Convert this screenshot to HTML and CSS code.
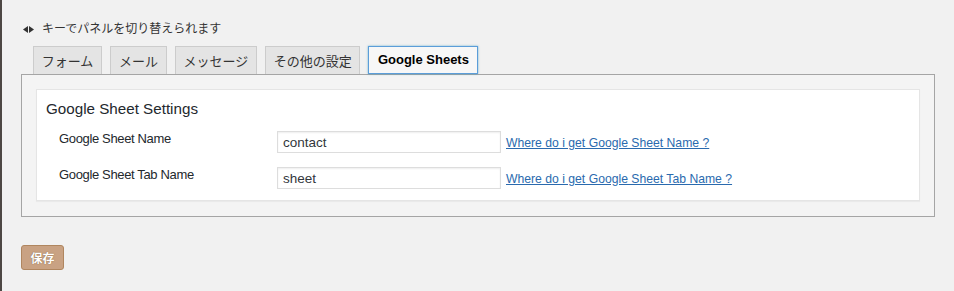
FILE: index.html
```html
<!DOCTYPE html>
<html lang="ja">
<head>
<meta charset="utf-8">
<title>Google Sheets</title>
<link rel="stylesheet" href="styles.css">
</head>
<body>
<div class="wrap">
  <p class="hint">
    <svg class="hint-icon" width="11" height="7" viewBox="0 0 11 7" aria-hidden="true">
      <polygon points="0,3.5 5,0 5,7" fill="#333"/>
      <polygon points="11,3.5 6,0 6,7" fill="#333"/>
    </svg>
    <span>キーでパネルを切り替えられます</span>
  </p>
  <ul class="tabs">
    <li class="tab">フォーム</li>
    <li class="tab">メール</li>
    <li class="tab">メッセージ</li>
    <li class="tab">その他の設定</li>
    <li class="tab tab-active">Google Sheets</li>
  </ul>
  <div class="panel">
    <div class="box">
      <h2 class="box-title">Google Sheet Settings</h2>
      <div class="form-grid">
        <label class="label">Google Sheet Name</label>
        <input class="field" type="text" value="contact">
        <a class="help" href="#">Where do i get Google Sheet Name ?</a>
        <label class="label">Google Sheet Tab Name</label>
        <input class="field" type="text" value="sheet">
        <a class="help" href="#">Where do i get Google Sheet Tab Name ?</a>
      </div>
    </div>
  </div>
  <button class="save" type="button">保存</button>
</div>
</body>
</html>
```

FILE: styles.css
```css
html, body {
  margin: 0;
  padding: 0;
}
body {
  background: #f1f1f1;
  border-left: 2px solid #4d4744;
  min-height: 291px;
  box-sizing: border-box;
  font-family: "Liberation Sans", Arial, "Noto Sans CJK JP", sans-serif;
  color: #333;
}
.wrap {
  padding: 0 18px 0 19px;
}
.hint {
  margin: 20px 0 0 2px;
  height: 16px;
  display: flex;
  align-items: center;
  gap: 8px;
  font-size: 12px;
  line-height: 16px;
  color: #333;
  font-family: "Noto Sans CJK JP", sans-serif;
}
.hint-icon {
  display: block;
  margin-top: 2px;
}
.tabs {
  list-style: none;
  margin: 10px 0 0 12px;
  padding: 0;
  display: flex;
  gap: 8px;
  height: 28px;
}
.tab {
  box-sizing: border-box;
  height: 28px;
  padding: 0 7.75px;
  border: 1px solid #ccc;
  border-bottom: none;
  background: #e4e4e4;
  color: #333;
  font-size: 13px;
  line-height: 27px;
  font-family: "Noto Sans CJK JP", sans-serif;
}
.tab-active {
  border: 1px solid #5b9dd9;
  background: #f7f7f7;
  box-shadow: 0 0 2px rgba(30, 140, 190, 0.6);
  color: #000;
  font-weight: bold;
  font-family: "Liberation Sans", Arial, sans-serif;
  padding: 0 8.5px;
  line-height: 26px;
  position: relative;
  z-index: 1;
}
.panel {
  box-sizing: border-box;
  width: 914px;
  border: 1px solid #a5a5a5;
  background: #f4f4f4;
  padding: 14px 14px 15px;
}
.box {
  box-sizing: border-box;
  height: 112px;
  background: #fff;
  border: 1px solid #e5e5e5;
  box-shadow: 0 1px 1px rgba(0, 0, 0, 0.04);
  padding: 9px 10px 0 9px;
}
.box-title {
  margin: 0;
  font-size: 15.2px;
  line-height: 20px;
  font-weight: normal;
  color: #23282d;
}
.form-grid {
  margin: 12px 0 0 13px;
  display: grid;
  grid-template-columns: 213px 224px auto;
  grid-auto-rows: 22px;
  row-gap: 14px;
  column-gap: 5px;
  align-items: start;
}
.label {
  font-size: 13px;
  line-height: 15px;
  letter-spacing: -0.35px;
  color: #23282d;
}
.field {
  box-sizing: border-box;
  width: 224px;
  height: 22px;
  margin: 0;
  padding: 0 5px;
  border: 1px solid #ddd;
  box-shadow: inset 0 1px 2px rgba(0, 0, 0, 0.07);
  background: #fff;
  font-family: "Liberation Sans", Arial, sans-serif;
  font-size: 13.5px;
  color: #32373c;
  outline: none;
}
.help {
  align-self: center;
  padding-top: 1px;
  font-size: 12.2px;
  color: #2a6aae;
  text-decoration: underline;
  white-space: nowrap;
}
.save {
  display: block;
  margin-top: 28px;
  box-sizing: border-box;
  width: 43px;
  height: 25px;
  padding: 0;
  border: 1px solid #b0865f;
  border-radius: 3px;
  background: #c9a283;
  color: #fff;
  font-family: "Noto Sans CJK JP", sans-serif;
  font-weight: bold;
  font-size: 12px;
  line-height: 23px;
  text-shadow: 0 0 1px rgba(90, 55, 25, 0.8);
}
```
